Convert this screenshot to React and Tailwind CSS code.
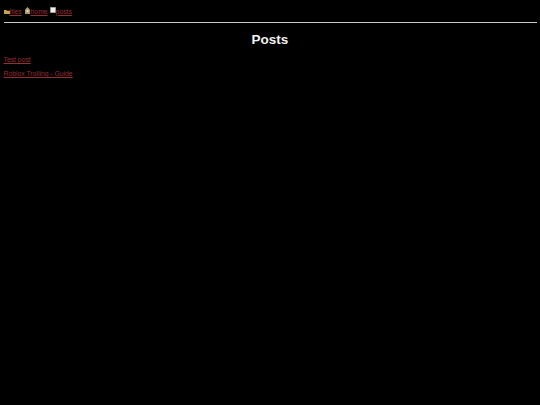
export default function App() {
  const link = "text-[#963030] underline";
  return (
    <div className="min-h-[405px] bg-black px-[3.5px] pt-[7px] font-['Liberation_Sans',Arial,sans-serif] text-[6.8px] leading-[8px] text-white">
      <nav className="flex h-[9px] items-center">
        <svg width="6" height="5" viewBox="0 0 6 5" className="mt-[-1px]">
          <path d="M0 1h2.5l.5.7H6V5H0z" fill="#c9a24a" />
        </svg>
        <a className={link}>files</a>
        <svg width="5" height="7" viewBox="0 0 5 7" className="ml-[3px] mt-[-3px]">
          <path d="M0 2.5 2.5 0 5 2.5V7H0z" fill="#a89a70" />
          <rect x="1.5" y="3" width="2" height="2" fill="#e0d9b8" />
        </svg>
        <a className={`${link} ml-[1px]`}>home</a>
        <svg width="6" height="6" viewBox="0 0 6 6" className="ml-[2px] mt-[-3px]">
          <rect x="0.25" y="0.25" width="5.5" height="5.5" fill="#efefef" stroke="#8a8a8a" strokeWidth="0.5" />
        </svg>
        <a className={link}>posts</a>
      </nav>
      <hr className="mt-[6px] border-0 border-t border-[#c8c8c8]" />
      <h1 className="mt-[9px] text-center text-[13.5px] leading-[16px] font-bold text-[#f2f2f2]">Posts</h1>
      <p className="mt-[8px]"><a className={link}>Test post</a></p>
      <p className="mt-[6px]"><a className={link}>Roblox Trolling - Guide</a></p>
    </div>
  );
}
